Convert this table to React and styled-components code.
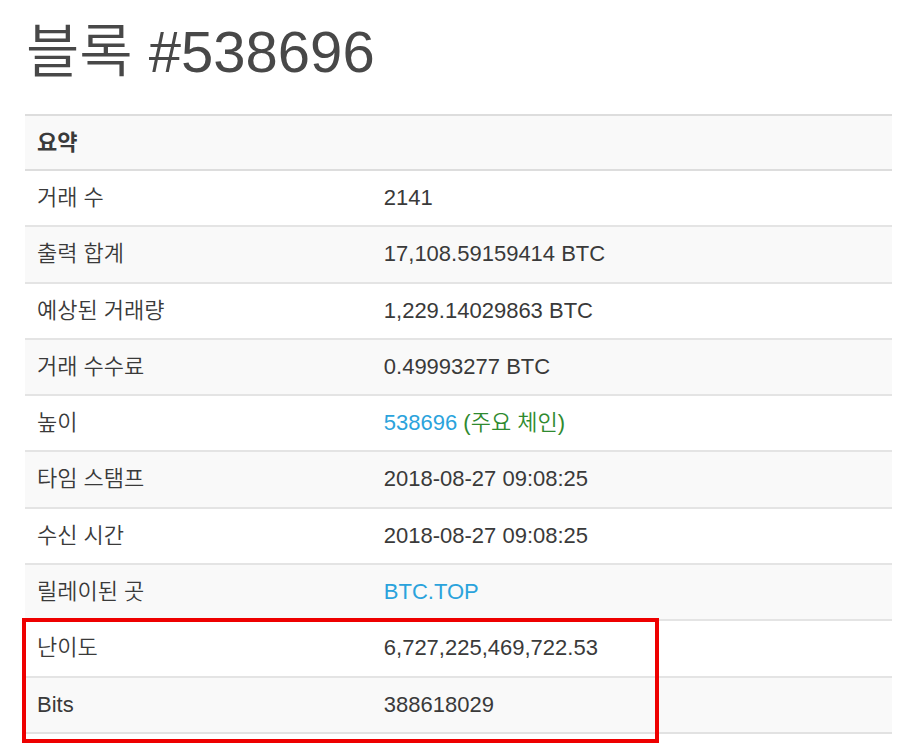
import React from 'react';
import styled, { createGlobalStyle } from 'styled-components';

const GlobalStyle = createGlobalStyle`
    html, body {
        margin: 0;
        padding: 0;
        background: #fff;
    }
    body {
        font-family: "Liberation Sans", Arial, "Noto Sans CJK KR", sans-serif;
        color: #333;
    }
`;

const rows = [
    { label: '거래 수', value: '2141' },
    { label: '출력 합계', value: '17,108.59159414 BTC' },
    { label: '예상된 거래량', value: '1,229.14029863 BTC' },
    { label: '거래 수수료', value: '0.49993277 BTC' },
    { label: '높이', value: '538696', link: true, note: '(주요 체인)' },
    { label: '타임 스탬프', value: '2018-08-27 09:08:25' },
    { label: '수신 시간', value: '2018-08-27 09:08:25' },
    { label: '릴레이된 곳', value: 'BTC.TOP', link: true },
    { label: '난이도', value: '6,727,225,469,722.53' },
    { label: 'Bits', value: '388618029' },
];

export default function App() {
    return (
        <>
            <GlobalStyle />
            <Page>
                <Title>블록 #538696</Title>
                <Table>
                    <thead>
                        <tr>
                            <HeadCell colSpan={2}>요약</HeadCell>
                        </tr>
                    </thead>
                    <tbody>
                        {rows.map((row) => (
                            <Row key={row.label}>
                                <LabelCell>{row.label}</LabelCell>
                                <Cell>
                                    {row.link ? <Link>{row.value}</Link> : row.value}
                                    {row.note && <Note> {row.note}</Note>}
                                </Cell>
                            </Row>
                        ))}
                    </tbody>
                </Table>
                <Highlight />
            </Page>
        </>
    );
}

const Page = styled.div`
    position: relative;
    padding: 0 24px 0 25px;
    height: 745px;
    box-sizing: border-box;
    overflow: hidden;
`;

const Title = styled.h1`
    margin: 20px 0 31px 1px;
    font-size: 58px;
    font-weight: 350;
    line-height: 63px;
    color: #484848;
`;

const Table = styled.table`
    width: 100%;
    border-collapse: collapse;
    border-spacing: 0;
    font-size: 22px;
    border-bottom: 2px solid #e2e2e2;
`;

const HeadCell = styled.th`
    text-align: left;
    font-weight: 700;
    padding: 12px 12px;
    line-height: 29px;
    background: #f9f9f9;
    border-top: 2px solid #dddddd;
    border-bottom: 2px solid #dddddd;
    color: #3a3a3a;
`;

const Row = styled.tr`
    &:nth-child(even) {
        background: #f9f9f9;
    }
`;

const Cell = styled.td`
    padding: 12px 12px;
    line-height: 30.3px;
    border-top: 2px solid #e4e4e4;
    color: #3a3a3a;
    font-weight: 350;
    white-space: nowrap;
`;

const LabelCell = styled(Cell)`
    width: 40%;
    padding-left: 12px;
`;

const Link = styled.span`
    color: #2ba3dc;
`;

const Note = styled.span`
    color: #2f8a2f;
`;

const Highlight = styled.div`
    position: absolute;
    left: 22px;
    top: 618px;
    width: 637px;
    height: 125px;
    box-sizing: border-box;
    border: 4.5px solid #ee0000;
    pointer-events: none;
`;
